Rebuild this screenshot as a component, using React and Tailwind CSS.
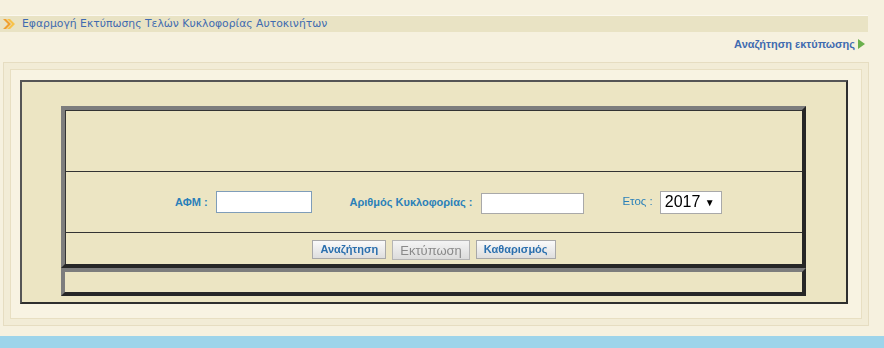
import React from 'react'

const Chevrons = () => (
    <svg width="12" height="10" viewBox="0 0 12 10">
        <path d="M0 0 L5 5 L0 10 L3 10 L8 5 L3 0 Z" fill="#f0a030" />
        <path d="M4 0 L9 5 L4 10 L7 10 L12 5 L7 0 Z" fill="#f7c24a" />
    </svg>
)

const App = () => {
    const [afm, setAfm] = React.useState('')
    const [plate, setPlate] = React.useState('')
    const [year, setYear] = React.useState('2017')

    return (
        <div className="w-[884px] h-[348px] bg-[#f6f1df] flex flex-col overflow-hidden" style={{ fontFamily: '"Liberation Sans", Arial, sans-serif' }}>
            <div className="h-[15px]"></div>
            <div className="w-[868px] h-[17px] bg-[#e9e3c4] border-t border-[#fbf8ee] flex items-center">
                <div className="ml-[3px] w-[14px] flex items-center"><Chevrons /></div>
                <span className="ml-[5px] text-[10.8px] text-[#3f6bb0]" style={{ fontFamily: '"DejaVu Sans", Verdana, sans-serif' }}>Εφαρμογή Εκτύπωσης Τελών Κυκλοφορίας Αυτοκινήτων</span>
            </div>
            <div className="w-[868px] h-[24px] flex items-center justify-end pr-[3px]">
                <span className="text-[11px] font-bold text-[#3f6bb0]">Αναζήτηση εκτύπωσης</span>
                <svg className="ml-[3px]" width="7" height="10" viewBox="0 0 7 10"><path d="M0 0 L7 5 L0 10 Z" fill="#6ab04c" /></svg>
            </div>
            <div className="h-[6px]"></div>
            <div className="ml-[3px] w-[866px] h-[264px] border border-[#e6ddc1] bg-[#f2ecd6] p-[6px]">
                <div className="h-full border border-[#e8dfc2] bg-[#f8f3e2] pt-[10px] pl-[9px] pr-[13px]">
                    <div className="h-[224px] border-2 border-t-[#555] border-l-[#555] border-r-[#2e2e2e] border-b-[#2e2e2e] bg-[#ece5c3] pt-[24px] pl-[39px] pr-[40px]">
                        <div className="border-4 border-t-[#7d7d7d] border-l-[#7d7d7d] border-r-[#262626] border-b-[#262626]">
                            <div className="h-[61px] border-t border-l border-[#333]"></div>
                            <div className="h-[61px] border-t border-l border-[#333] flex items-center text-[11px] font-bold text-[#2a80b9]">
                                <span className="ml-[109px]">ΑΦΜ :</span>
                                <input type="text" value={afm} onChange={(e) => setAfm(e.target.value)} autoFocus className="ml-[8px] w-[96px] h-[22px] bg-white border border-[#7f9db9] outline-none px-[2px] text-[13px] text-black font-normal" />
                                <span className="ml-[38px]">Αριθμός Κυκλοφορίας :</span>
                                <input type="text" value={plate} onChange={(e) => setPlate(e.target.value)} className="ml-[9px] mt-[3px] w-[103px] h-[21px] bg-white border border-[#a9a9a9] outline-none px-[2px] text-[13px] text-black font-normal" />
                                <span className="ml-[38px] font-normal text-[11.5px]">Ετος :</span>
                                <div className="ml-[7px] w-[62px] h-[23px] bg-white border border-[#a9a9a9] flex items-center justify-between pl-[4px] pr-[6px] text-[16px] text-black font-normal">
                                    <span>{year}</span>
                                    <span className="text-[10px]">▼</span>
                                </div>
                            </div>
                            <div className="h-[32px] border-t border-l border-[#333] flex items-center justify-center gap-[6px] pt-[2px]">
                                <button onClick={() => setYear('2017')} className="h-[19px] px-[7px] bg-gradient-to-b from-[#fafafa] to-[#dedede] border border-[#a8a8a8] text-[11px] font-bold text-[#2a6fae]">Αναζήτηση</button>
                                <button disabled className="h-[20px] px-[7px] bg-gradient-to-b from-[#f4f4f4] to-[#dcdcdc] border border-[#b5b5b5] text-[13px] text-[#8a8a8a]">Εκτύπωση</button>
                                <button onClick={() => { setAfm(''); setPlate('') }} className="h-[19px] px-[7px] bg-gradient-to-b from-[#fafafa] to-[#dedede] border border-[#a8a8a8] text-[11px] font-bold text-[#2a6fae]">Καθαρισμός</button>
                            </div>
                        </div>
                        <div className="h-[28px] border-4 border-t-[#7d7d7d] border-l-[#7d7d7d] border-r-[#262626] border-b-[#262626]"></div>
                    </div>
                </div>
            </div>
            <div className="h-[10px]"></div>
            <div className="flex-1 bg-[#9dd4ea]"></div>
        </div>
    )
}

export default App
